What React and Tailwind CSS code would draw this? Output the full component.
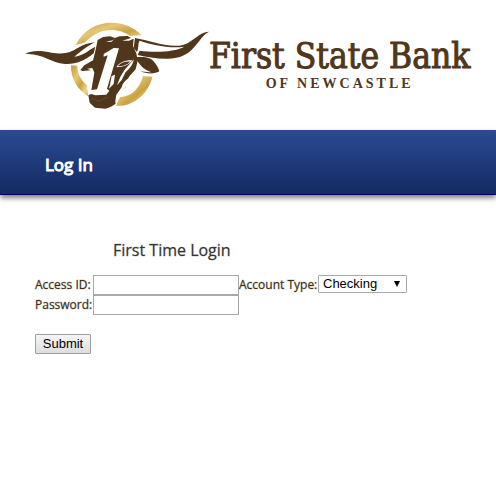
import { useState } from "react";

const BullLogo = () => (
  <svg viewBox="0 0 600 285" className="w-[200px] shrink-0" aria-hidden="true">
    <defs>
      <linearGradient id="gold" x1="0" y1="0" x2="1" y2="1">
        <stop offset="0" stopColor="#c39a35" />
        <stop offset="0.35" stopColor="#e6c778" />
        <stop offset="0.6" stopColor="#c9a13f" />
        <stop offset="0.85" stopColor="#efd898" />
        <stop offset="1" stopColor="#c59c37" />
      </linearGradient>
    </defs>
    {/* Ring */}
    <g fill="url(#gold)">
      <path d="M182 75 C205 30 245 8 290 8 C325 8 358 22 380 46 L345 48 C320 28 275 22 238 44 C225 52 215 62 208 68 Z" />
      <path d="M168 136 L187 137 C187 160 196 178 216 196 L219 228 C187 210 167 175 168 136 Z" />
      <path d="M384 168 L412 170 C400 225 350 262 303 257 L315 231 C350 230 374 205 384 168 Z" />
    </g>
    {/* Horns */}
    <g fill="#50361a">
      <path d="M31 102 C50 90 80 92 110 98 C150 105 168 96 188 84 C205 74 220 69 240 67 C215 80 200 92 178 110 C204 107 218 92 241 80 L236 100 C210 122 180 134 150 132 C105 128 80 98 31 102 Z" />
      <path d="M360 54 C400 60 440 79 490 77 C530 75 545 38 582 35 C558 48 548 76 520 98 C480 126 420 116 368 105 L374 92 C420 98 480 96 508 80 C460 86 410 74 374 62 C368 70 372 82 366 96 L356 84 Z" />
    </g>
    {/* Head */}
    <g fill="#50361a">
      <path d="M240 98 L248 60 L264 51 L286 49 L300 54 L314 49 L338 48 L348 54 L322 62 L342 62 L356 56 L354 78 L364 100 L368 122 L362 148 L342 170 L330 204 L310 224 L301 252 L288 260 L272 266 L240 263 L224 248 L220 226 L228 222 L242 226 L274 224 L283 212 L276 206 L312 85 L296 84 L266 102 L266 110 L278 106 L246 208 L229 210 L238 158 L232 144 L216 146 L228 151 L202 153 L196 150 L208 136 L234 121 Z" />
      <path d="M362 112 C385 110 404 110 416 124 C424 134 430 143 433 154 C420 162 398 163 376 154 C392 156 398 157 410 157 C388 150 370 134 362 112 Z" />
    </g>
    {/* Cuts in the face */}
    <g fill="#fff">
      <path d="M304 142 C314 126 330 120 352 121 C346 132 326 142 304 142 Z" />
      <path d="M357 118 C352 138 342 148 332 156 L320 180 L306 196 L316 170 L330 148 Z" />
      <path d="M290 168 L300 164 L296 192 L282 206 L286 188 Z" />
      <path d="M344 172 C334 180 324 186 320 202 L304 224 L300 250 L326 214 Z" />
      <path d="M298 58 L288 62 L272 64 L288 66 Z" />
    </g>
    <path d="M308 139 C318 128 332 124 345 125 C338 134 322 139 308 139 Z" fill="#50361a" />
    <path d="M229 238 C238 232 246 244 252 244 C262 240 272 232 280 232" fill="none" stroke="#77593a" strokeWidth="2" />
  </svg>
);

const App = () => {
  const [accessId, setAccessId] = useState("");
  const [password, setPassword] = useState("");
  const [accountType, setAccountType] = useState("Checking");

  return (
    <div className="min-h-screen bg-white font-['Open_Sans',sans-serif] text-[#3c2d12]">
      {/* Bank logo */}
      <header className="flex h-[130px] items-start pl-[15px] pt-5 text-[#50361a]">
        <BullLogo />
        <div className="-ml-1.5 flex flex-col items-center pt-4 whitespace-nowrap">
          <span className="font-['DejaVu_Serif_Condensed','DejaVu_Serif',serif] text-[35px] leading-10 [-webkit-text-stroke:1px_#50361a]">
            First State Bank
          </span>
          <span className="font-['Liberation_Serif',serif] text-[14px] leading-4 font-bold tracking-[3px]">
            OF NEWCASTLE
          </span>
        </div>
      </header>

      {/* Title bar */}
      <div className="flex h-[65px] items-center border-b border-[#000066] bg-linear-to-b from-[#2a4b93] to-[#152a62] px-[45px] pt-1.5 shadow-[0_3px_5px_rgba(0,0,0,0.5)]">
        <h1 className="text-[17px] font-normal text-white [-webkit-text-stroke:1px_#ffffff]">Log In</h1>
      </div>

      <main className="px-[35px] pt-[43px]">
        <h2 className="pl-[78px] text-base leading-6 text-[#333333] [-webkit-text-stroke:1px_#33333340]">First Time Login</h2>
        <form onSubmit={(e) => e.preventDefault()} className="pt-[13px] text-[12px]">
          <div className="flex h-5 items-center">
            <label htmlFor="accessId" className="w-[58px] shrink-0 whitespace-nowrap [-webkit-text-stroke:1px_#3c2d1240]">Access ID:</label>
            <input
              id="accessId"
              type="text"
              className="h-5 w-[146px] border border-[#a9a9a9] bg-white px-1"
              value={accessId}
              onChange={(e) => setAccessId(e.target.value)}
            />
            <label htmlFor="accountType" className="w-[79px] shrink-0 whitespace-nowrap [-webkit-text-stroke:1px_#3c2d1240]">Account Type:</label>
            <div className="relative -mt-0.5">
              <select
                id="accountType"
                className="block h-[18px] w-[89px] appearance-none rounded-[1px] border border-[#a9a9a9] bg-white pl-1 font-['Liberation_Sans',sans-serif] text-[13px] leading-4 font-normal text-black"
                value={accountType}
                onChange={(e) => setAccountType(e.target.value)}
              >
                <option>Checking</option>
                <option>Savings</option>
              </select>
              <svg viewBox="0 0 6 6" className="pointer-events-none absolute top-[6px] right-[7px] size-[6px]" aria-hidden="true">
                <path d="M0 0h6L3 6z" fill="#000" />
              </svg>
            </div>
          </div>
          <div className="flex h-5 items-center">
            <label htmlFor="password" className="w-[58px] shrink-0 whitespace-nowrap [-webkit-text-stroke:1px_#3c2d1240]">Password:</label>
            <input
              id="password"
              type="password"
              className="h-5 w-[146px] border border-[#a9a9a9] bg-white px-1"
              value={password}
              onChange={(e) => setPassword(e.target.value)}
            />
          </div>
          <button
            type="submit"
            className="mt-[19px] h-5 w-14 rounded-[1px] border border-[#a0a0a0] bg-linear-to-b from-[#f6f6f6] to-[#dddddd] font-['Liberation_Sans',sans-serif] text-[13px] leading-4 font-normal text-black"
          >
            Submit
          </button>
        </form>
      </main>
    </div>
  );
};

export default App;
